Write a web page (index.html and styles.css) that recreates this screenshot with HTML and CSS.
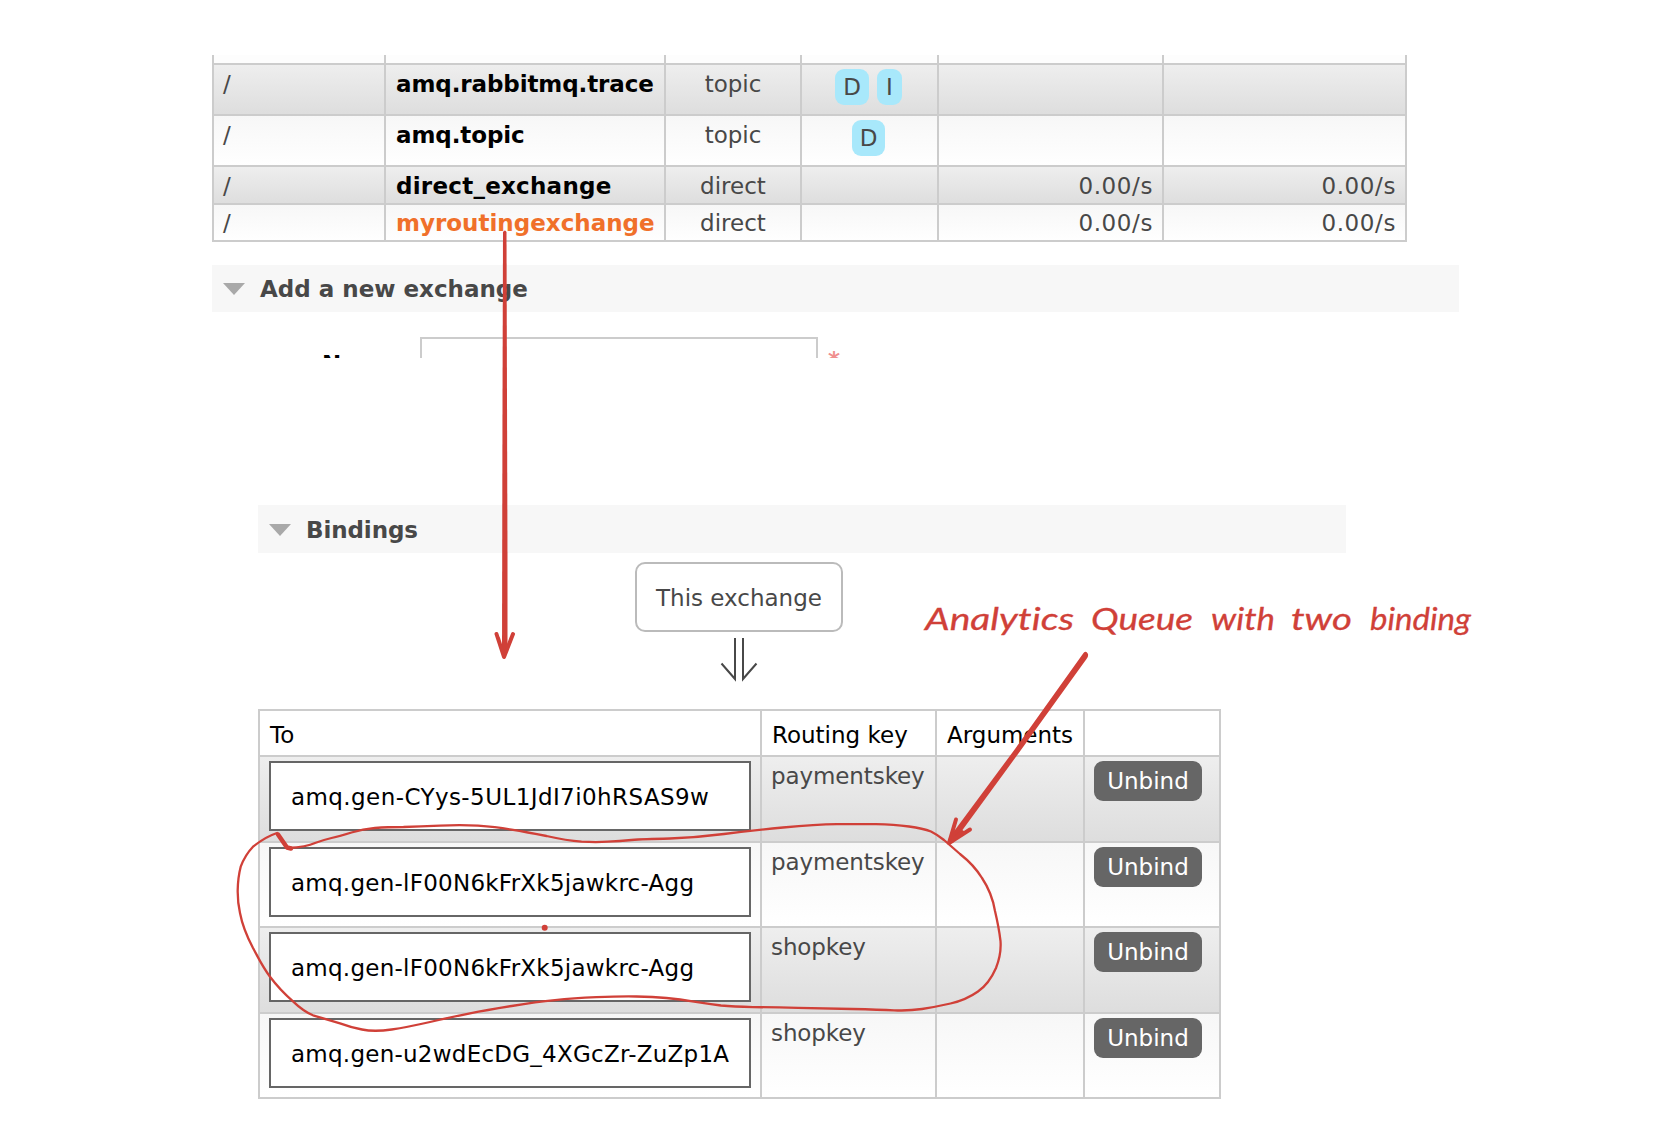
FILE: index.html
```html
<!DOCTYPE html>
<html lang="en">
<head>
<meta charset="utf-8">
<title>Exchange bindings</title>
<link rel="stylesheet" href="styles.css">
</head>
<body>
<main class="page">
  <section class="exchanges">
    <table class="grid exchange-table">
      <colgroup><col class="c-vhost"><col class="c-name"><col class="c-type"><col class="c-feat"><col class="c-in"><col class="c-out"></colgroup>
      <tbody>
        <tr class="row-cut"><td></td><td></td><td></td><td></td><td></td><td></td></tr>
        <tr class="alt tall"><td>/</td><td class="name">amq.rabbitmq.trace</td><td class="mid">topic</td><td class="mid feat"><div class="tags"><span class="tag">D</span><span class="tag">I</span></div></td><td></td><td></td></tr>
        <tr class="tall"><td>/</td><td class="name">amq.topic</td><td class="mid">topic</td><td class="mid feat"><div class="tags"><span class="tag">D</span></div></td><td></td><td></td></tr>
        <tr class="alt short"><td>/</td><td class="name wide">direct_exchange</td><td class="mid">direct</td><td></td><td class="num">0.00/s</td><td class="num">0.00/s</td></tr>
        <tr class="last"><td>/</td><td class="name active">myroutingexchange</td><td class="mid">direct</td><td></td><td class="num">0.00/s</td><td class="num">0.00/s</td></tr>
      </tbody>
    </table>
    <h2 class="bar"><svg class="caret" width="22" height="12" viewBox="0 0 22 12"><path d="M0 0H22L11 12Z"/></svg>Add a new exchange</h2>
    <div class="form-row"><span class="label">Name:</span><span class="input"></span><span class="required">*</span></div>
  </section>

  <section class="bindings">
    <h2 class="bar"><svg class="caret" width="22" height="12" viewBox="0 0 22 12"><path d="M0 0H22L11 12Z"/></svg>Bindings</h2>
    <div class="flow">
      <div class="this-exchange">This exchange</div>
      <svg class="down" width="38" height="44" viewBox="0 0 38 44"><path d="M15 0V41L1.500 25.500M23 0V41L36.500 25.500"/></svg>
    </div>
    <table class="grid binding-table">
      <colgroup><col class="b-to"><col class="b-key"><col class="b-args"><col class="b-act"></colgroup>
      <thead><tr><th>To</th><th>Routing key</th><th>Arguments</th><th></th></tr></thead>
      <tbody>
        <tr class="alt r86"><td><div class="queue q1">amq.gen-CYys-5UL1JdI7i0hRSAS9w</div></td><td>paymentskey</td><td></td><td><button class="unbind">Unbind</button></td></tr>
        <tr class="r85"><td><div class="queue q2">amq.gen-lF00N6kFrXk5jawkrc-Agg</div></td><td>paymentskey</td><td></td><td><button class="unbind">Unbind</button></td></tr>
        <tr class="alt r86"><td><div class="queue q2">amq.gen-lF00N6kFrXk5jawkrc-Agg</div></td><td>shopkey</td><td></td><td><button class="unbind">Unbind</button></td></tr>
        <tr class="r85"><td><div class="queue q3">amq.gen-u2wdEcDG_4XGcZr-ZuZp1A</div></td><td>shopkey</td><td></td><td><button class="unbind">Unbind</button></td></tr>
      </tbody>
    </table>
  </section>

  <svg class="notes" width="1670" height="1124" viewBox="0 0 1670 1124">
    <path class="ink-fill" d="M503 232Q505 229 506.500 232L507.500 560L507.500 650Q504 663 502 650L502.500 400Z"/>
    <path class="ink head" d="M496.500 634L504 657L513 634M498 638Q501 648 504 656"/>
    <path class="ink-fill" d="M1083.500 653Q1086 650 1088 654Q1088.500 657 1086.500 659L1019.500 752L953 843L947 844L949 838L1015 749Z"/>
    <path class="ink head" d="M956 819.500L949 843L970 829.500M954 832L950 842L962 832"/>
    <path class="ink nib" d="M278 834.500L287 847.500L291 848.500"/>
    <path class="ink loop" d="M288 848Q306.700 847 315 843Q323 840 331.500 838Q340 836 351.500 832.500Q363 829 375 828Q387 827 403.500 827Q420 826.500 440 825.700Q460 824.500 478 825.700Q496.700 827 511.500 829.700Q526.700 832.300 546.500 836Q566.700 840.500 581.500 841.700Q596.700 842.500 608 841.700Q620 841 631.500 840Q643 839 670 838.500Q696.700 837.500 724 834Q751 830.700 783 827.500Q816 824.500 837 824.200Q858.600 824 876 824.200Q894 824.500 909 826.500Q923 828.500 931 831.500Q937 834.500 944 840L960 854Q974 865 982 878Q992 893 995 911Q999 928 1000.500 941Q1001.500 954 996 968Q989 984 978 991.500Q966 1000 950.500 1003.500Q935 1007 922 1009Q908.600 1011 894 1010.300Q880 1009.700 852 1009Q823 1008.300 798 1007.800Q773 1007.300 753 1007.100Q733.600 1006.700 721 1005.500Q708.600 1004 694 1001.700Q680 999.300 666.500 998Q653 996.800 636.500 996.500Q620 996.200 596.500 997.200Q573 998.300 555 1000.200Q536.700 1002 511.700 1006Q486.700 1010 470 1013.300Q453 1016.700 430 1022Q406.700 1027.300 391.700 1029.500Q374 1032 362 1029.500Q350 1027 340 1023.300L313 1015.300Q303 1011 293 1001.300Q280 990 270 976.700C262 966 258 957 253 948Q243 929 240 913Q237.500 902 237.700 890Q238 877 240.700 866.700Q245 855 253 846.700Q265 837 277 833"/>
    <circle class="ink-fill" cx="544.700" cy="927.700" r="3"/>
    <g class="script">
      <text x="925" y="630" textLength="149" lengthAdjust="spacingAndGlyphs">Analytics</text>
      <text x="1091" y="630" textLength="102" lengthAdjust="spacingAndGlyphs">Queue</text>
      <text x="1211" y="630" textLength="64" lengthAdjust="spacingAndGlyphs">with</text>
      <text x="1291" y="630" textLength="61" lengthAdjust="spacingAndGlyphs">two</text>
      <text x="1370" y="630" textLength="101" lengthAdjust="spacingAndGlyphs">binding</text>
    </g>
  </svg>
</main>
</body>
</html>
```
FILE: styles.css
```css
* { box-sizing: border-box; }
body {
  margin: 0;
  background: #fff;
  color: #484848;
  font: 23px/28px Verdana, "DejaVu Sans", sans-serif;
}
.page { position: relative; width: 1670px; height: 1124px; overflow: hidden; padding-top: 55px; }

.grid { table-layout: fixed; border-collapse: separate; border-spacing: 0; border-left: 2px solid #ccc; }
.grid td, .grid th {
  border-right: 2px solid #ccc;
  border-bottom: 2px solid #ccc;
  padding: 5px 9px 0 10px;
  vertical-align: top;
  text-align: left;
  white-space: nowrap;
}
.grid tbody tr { background: linear-gradient(#f7f7f7, #fff); }
.grid tbody tr.alt { background: linear-gradient(#eee, #ddd); }

.exchanges { height: 303px; margin-left: 212px; overflow: hidden; }
.exchange-table { width: 1195px; }
.exchange-table td { padding-left: 9px; }
.c-vhost { width: 172px; }
.c-name { width: 280px; }
.c-type { width: 136px; }
.c-feat { width: 137px; }
.c-in { width: 225px; }
.c-out { width: 243px; }
.grid .row-cut td { height: 10px; padding: 0; background: #fdfdfd; }
.tall { height: 51px; }
.short { height: 38px; }
.last { height: 37px; }
.grid .last td { padding-top: 4px; }
.grid .name { padding-left: 10px; color: #000; font-weight: bold; letter-spacing: -0.1px; }
.grid .wide { letter-spacing: 0.25px; }
.grid .active { color: #f0702a; letter-spacing: 0; }
.grid .mid { text-align: center; padding-left: 10px; padding-right: 10px; }
.grid .feat { padding: 4px 11px 0 9px; }
.grid .num { text-align: right; padding-right: 9px; letter-spacing: 0.6px; }
.tags { display: flex; justify-content: center; gap: 8px; }
.tag { height: 36px; padding: 4px 8px; border-radius: 9px; background: #a8e8fb; }
.tag + .tag { padding: 4px 9px; }

.bar {
  display: flex;
  align-items: center;
  gap: 15px;
  height: 47px;
  margin: 0;
  padding-left: 11px;
  background: #f7f7f7;
  font-size: 23px;
  font-weight: bold;
}
.caret { fill: #a9a9a9; }
.exchanges .bar { width: 1247px; margin-top: 23px; }
.form-row { display: flex; margin-top: 25px; }
.label { width: 208px; padding: 13px 0 0 110px; color: #000; font-weight: bold; }
.input { width: 398px; height: 45px; border: 2px solid #ccc; }
.required { padding: 9px 0 0 10px; color: #f08f8f; font-weight: bold; }

.bindings { margin: 147px 0 0 258px; }
.bindings .bar { width: 1088px; height: 48px; padding-top: 2px; letter-spacing: -0.1px; }
.flow { display: flex; flex-direction: column; align-items: center; width: 962px; padding: 9px 0 27px; }
.this-exchange {
  width: 208px;
  height: 70px;
  border: 2px solid #bbb;
  border-radius: 10px;
  line-height: 69px;
  text-align: center;
}
.down { margin-top: 6px; fill: none; stroke: #484848; stroke-width: 2; }
.binding-table { width: 963px; border-top: 2px solid #ccc; }
.b-to { width: 502px; }
.b-key { width: 175px; }
.b-args { width: 148px; }
.b-act { width: 136px; }
.binding-table th { height: 46px; padding-top: 10px; color: #000; font-weight: normal; }
.r86 { height: 86px; }
.r85 { height: 85px; }
.binding-table td { letter-spacing: -0.1px; }
.binding-table td:nth-child(2) { padding-left: 9px; }
.binding-table td:first-child, .binding-table td:last-child { padding: 4px 9px 0; }
.queue { width: 482px; height: 70px; padding-left: 20px; border: 2px solid #666; background: #fff; color: #000; line-height: 68px; }
.q1 { letter-spacing: 0.42px; }
.q2, .q3 { letter-spacing: 0.25px; }
.unbind {
  display: block;
  width: 108px;
  height: 40px;
  padding: 0;
  border: 0;
  border-radius: 9px;
  background: #666;
  color: #fff;
  font: inherit;
}

.notes { position: absolute; top: 0; left: 0; }
.ink { fill: none; stroke: #d04038; stroke-linecap: round; stroke-linejoin: round; }
.ink-fill { fill: #d04038; }
.head { stroke-width: 4; }
.nib { stroke-width: 4.500; }
.loop { stroke-width: 2.300; }
.script { fill: #d04038; stroke: #d04038; stroke-width: 0.300; font: italic 31px Virgil, Lato, sans-serif; font-variant-ligatures: none; }
```
